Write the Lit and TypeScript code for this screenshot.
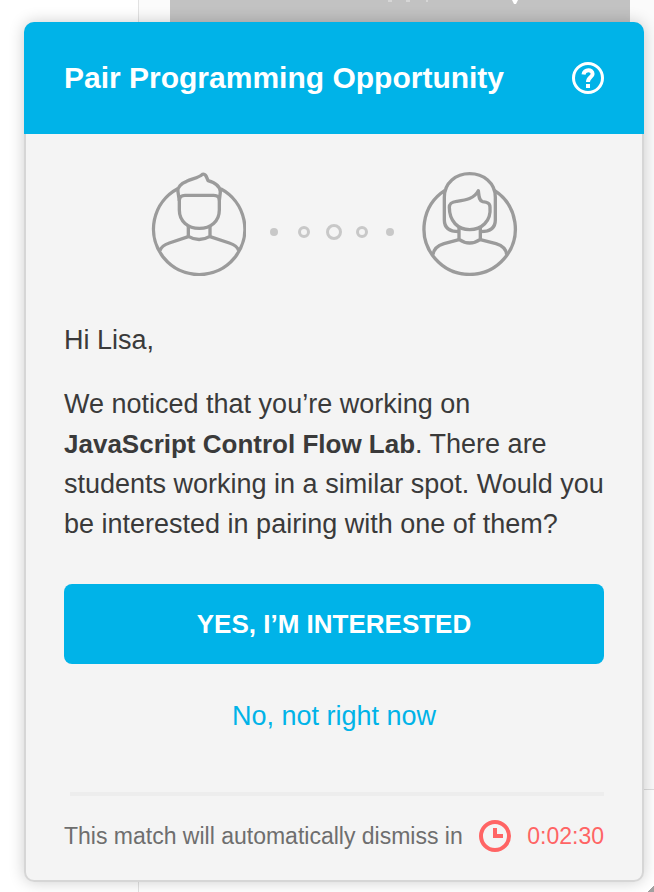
import { LitElement, html, css } from "lit";
import { customElement, property } from "lit/decorators.js";

@customElement("pairing-figures")
class PairingFigures extends LitElement {
  static styles = css`
    :host {
      display: flex;
      justify-content: center;
    }
    .avatar {
      width: 96px;
      height: 104px;
      fill: none;
      stroke: #9b9b9b;
      stroke-width: 10;
      stroke-linejoin: round;
    }
    .dots {
      width: 176px;
      height: 104px;
    }
    .solid {
      fill: #c8c8c8;
    }
    .ring {
      fill: none;
      stroke: #c8c8c8;
      stroke-width: 3;
    }
  `;

  render() {
    return html`
      <svg class="avatar" viewBox="32 36 288 312" aria-hidden="true">
        <path d="M115 86A137 137 0 1 0 244 86" />
        <path d="M120 122L116 96C114 82 126 70 142 64C160 56 180 52 189 43C199 40 201 50 206 62C226 68 243 78 243 96L240 122" />
        <path d="M120 120C121 109 128 106 137 106H223C234 106 240 110 240 120V150C240 184 214 205 180 205C146 205 120 184 120 150Z" />
        <path d="M147 198V229Q179 248 212 229V198" />
        <path d="M147 230L90 249Q66 257 62 272M212 230L270 249Q294 257 298 272" />
      </svg>
      <svg class="dots" viewBox="0 0 176 104" aria-hidden="true">
        <circle class="solid" cx="28" cy="60" r="4" />
        <circle class="ring" cx="58" cy="60" r="4.5" />
        <circle class="ring" cx="88" cy="60" r="6.5" />
        <circle class="ring" cx="116" cy="60" r="4.5" />
        <circle class="solid" cx="144" cy="60" r="4" />
      </svg>
      <svg class="avatar" viewBox="36 36 288 312" aria-hidden="true">
        <path d="M105 91A137 137 0 1 0 253 91" />
        <path d="M147 215C120 215 103 204 103 180V112C103 68 138 41 179 41C220 41 256 68 256 112V180C256 204 240 215 212 215" />
        <path d="M118 142C118 129 127 126 140 124C166 120 194 116 205 92C207 106 206 122 218 125C232 127 240 129 240 142C244 184 214 209 179 209C144 209 118 184 118 142Z" />
        <path d="M147 204V238Q179 260 211 238V204" />
        <path d="M147 239L102 251Q72 260 69 284M211 239L258 251Q288 260 290 284" />
      </svg>
    `;
  }
}

@customElement("app-root")
class AppRoot extends LitElement {
  @property() name = "Lisa";
  @property() lab = "JavaScript Control Flow Lab";
  @property() remaining = "0:02:30";

  static styles = css`
    :host {
      display: grid;
      min-height: 100vh;
      overflow: hidden;
      background: #fff;
      font-family: "Liberation Sans", Arial, sans-serif;
      color: #3a3a3a;
    }
    .page,
    .card {
      grid-area: 1 / 1;
      min-width: 0;
    }
    .page {
      display: grid;
      grid-template-columns: 138px 1fr;
    }
    .content {
      display: flex;
      flex-direction: column;
      border-left: 1px solid #e2e2e2;
      background: #fbfbfb;
    }
    .banner {
      height: 40px;
      margin: 0 24px 0 31px;
      background: #c2c2c2;
    }
    .marks {
      display: block;
      width: 460px;
      height: 4px;
    }
    .foot {
      display: flex;
      justify-content: flex-end;
      align-items: flex-end;
      height: 102px;
      margin-top: auto;
      border-top: 1px solid #dedede;
      background: #fff;
    }
    .corner {
      width: 6px;
      height: 7px;
      background: linear-gradient(135deg, transparent 50%, #a0a0a0 50%);
    }
    .card {
      position: relative;
      align-self: start;
      margin: 22px 10px 9px 24px;
      border-radius: 10px;
      background: #f4f4f4;
      box-shadow:
        inset 0 0 0 2px #d6d6d6,
        0 0 16px rgba(0, 0, 0, 0.2);
    }
    .head {
      display: flex;
      align-items: center;
      justify-content: space-between;
      height: 112px;
      padding: 0 40px;
      border-radius: 10px 10px 0 0;
      background: #00b3e8;
      color: #fff;
    }
    h1 {
      margin: 0;
      font-size: 30px;
      line-height: 40px;
      font-weight: 700;
    }
    button {
      margin: 0;
      border: 0;
      padding: 0;
      background: none;
      font: inherit;
      color: inherit;
      cursor: pointer;
    }
    .icon {
      display: block;
      flex: none;
      width: 32px;
      height: 32px;
      fill: none;
      stroke: currentColor;
      stroke-width: 3;
    }
    .mark {
      stroke-width: 4;
    }
    .body {
      padding: 38px 40px 26px;
    }
    .text {
      margin: 24px 0 0;
      font-size: 27px;
      line-height: 40px;
    }
    .greeting {
      margin-top: 44px;
    }
    b {
      font-size: 26px;
    }
    .yes {
      display: block;
      width: 100%;
      height: 80px;
      margin-top: 40px;
      border-radius: 8px;
      background: #00b3e8;
      color: #fff;
      font-size: 26px;
      font-weight: 700;
    }
    .no {
      display: block;
      margin: 32px auto 0;
      color: #00b3e8;
      font-size: 27px;
      line-height: 40px;
    }
    hr {
      height: 4px;
      margin: 56px 0 0 6px;
      border: 0;
      background: #ededed;
    }
    .timer {
      display: flex;
      align-items: center;
      padding-top: 20px;
      font-size: 23px;
      line-height: 40px;
      color: #6e6e6e;
    }
    .clock {
      margin-left: auto;
      margin-right: 16px;
      color: #ff6464;
      stroke-width: 4;
    }
    time {
      color: #ff6464;
    }
  `;

  render() {
    return html`
      <div class="page" aria-hidden="true">
        <div></div>
        <div class="content">
          <div class="banner">
            <svg class="marks" viewBox="0 0 460 4">
              <path fill="#d6d6d6" d="M218 0h4v2h-4zM236 0h4v2h-4zM256 0h2v2h-2z" />
              <path fill="#fff" d="M342 0h6l-2 4h-2z" />
            </svg>
          </div>
          <div class="foot"><div class="corner"></div></div>
        </div>
      </div>
      <section class="card">
        <header class="head">
          <h1>Pair Programming Opportunity</h1>
          <button aria-label="Help">
            <svg class="icon" viewBox="0 0 32 32">
              <circle cx="16" cy="16" r="14.5" />
              <path class="mark" d="M11.5 12.5C12 7 20.6 7 20.6 12C20.6 15.2 16 15 16 20M16 22V26" />
            </svg>
          </button>
        </header>
        <div class="body">
          <pairing-figures></pairing-figures>
          <p class="text greeting">Hi ${this.name},</p>
          <p class="text">
            We noticed that you’re working on<br />
            <b>${this.lab}</b>. There are students working in a similar spot.
            Would you be interested in pairing with one of them?
          </p>
          <button class="yes">YES, I’M INTERESTED</button>
          <button class="no">No, not right now</button>
          <hr />
          <div class="timer">
            <span>This match will automatically dismiss in</span>
            <svg class="icon clock" viewBox="0 0 32 32" aria-hidden="true">
              <circle cx="16" cy="16" r="14" />
              <path d="M16 8V16H24" />
            </svg>
            <time>${this.remaining}</time>
          </div>
        </div>
      </section>
    `;
  }
}
